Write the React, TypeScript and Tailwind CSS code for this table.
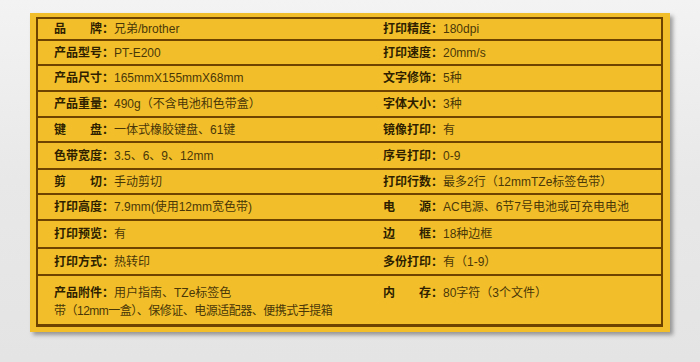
import React from "react";

type Row = { h: string; l: [string, string]; r: [string, string] };

const rows: Row[] = [
  { h: "h-[22px]", l: ["品　　牌：", "兄弟/brother"], r: ["打印精度：", "180dpi"] },
  { h: "h-[25px]", l: ["产品型号：", "PT-E200"], r: ["打印速度：", "20mm/s"] },
  { h: "h-[26px]", l: ["产品尺寸：", "165mmX155mmX68mm"], r: ["文字修饰：", "5种"] },
  { h: "h-[26px]", l: ["产品重量：", "490g（不含电池和色带盒）"], r: ["字体大小：", "3种"] },
  { h: "h-[25px]", l: ["键　　盘：", "一体式橡胶键盘、61键"], r: ["镜像打印：", "有"] },
  { h: "h-[27px]", l: ["色带宽度：", "3.5、6、9、12mm"], r: ["序号打印：", "0-9"] },
  { h: "h-[25px]", l: ["剪　　切：", "手动剪切"], r: ["打印行数：", "最多2行（12mmTZe标签色带）"] },
  { h: "h-[26px]", l: ["打印高度：", "7.9mm(使用12mm宽色带)"], r: ["电　　源：", "AC电源、6节7号电池或可充电电池"] },
  { h: "h-[28px]", l: ["打印预览：", "有"], r: ["边　　框：", "18种边框"] },
  { h: "h-[27px]", l: ["打印方式：", "热转印"], r: ["多份打印：", "有（1-9）"] },
];

function Cell({ label, value }: { label: string; value: React.ReactNode }) {
  return (
    <div className="flex items-center px-4 whitespace-nowrap">
      <span className="font-bold text-[#2f1f00]">{label}</span>
      <span className="text-[#4a3708]">{value}</span>
    </div>
  );
}

export default function App() {
  return (
    <div
      className="w-[700px] h-[362px] bg-gradient-to-b from-[#f3f3f3] via-[#e8e8e8] to-[#e4e4e4] pt-[13px] pl-[30px]"
      style={{ fontFamily: '"Liberation Sans", "Noto Sans CJK SC", sans-serif' }}
    >
      <div className="w-[640px] h-[319px] bg-[#f2bf2a] pt-[4px] pl-[6px] pr-[7px] shadow-[3px_3px_4px_rgba(0,0,0,0.35)]">
        <div className="border-2 border-[#6e4300] text-[12px] leading-[18px]">
          {rows.map((row, i) => (
            <div key={i} className={`grid grid-cols-[329px_1fr] border-b-2 border-[#6e4300] ${row.h}`}>
              <Cell label={row.l[0]} value={row.l[1]} />
              <Cell label={row.r[0]} value={row.r[1]} />
            </div>
          ))}
          <div className="grid grid-cols-[329px_1fr] h-[49px] border-b border-[#6e4300]">
            <div className="px-4 pt-[8px]">
              <span className="font-bold text-[#2f1f00]">产品附件：</span>
              <span className="text-[#4a3708]">用户指南、TZe标签色</span>
              <br />
              <span className="text-[#4a3708] whitespace-nowrap tracking-[-0.5px]">带（12mm一盒）、保修证、电源适配器、便携式手提箱</span>
            </div>
            <div className="px-4 pt-[8px]">
              <span className="font-bold text-[#2f1f00]">内　　存：</span>
              <span className="text-[#4a3708]">80字符（3个文件）</span>
            </div>
          </div>
        </div>
      </div>
    </div>
  );
}
